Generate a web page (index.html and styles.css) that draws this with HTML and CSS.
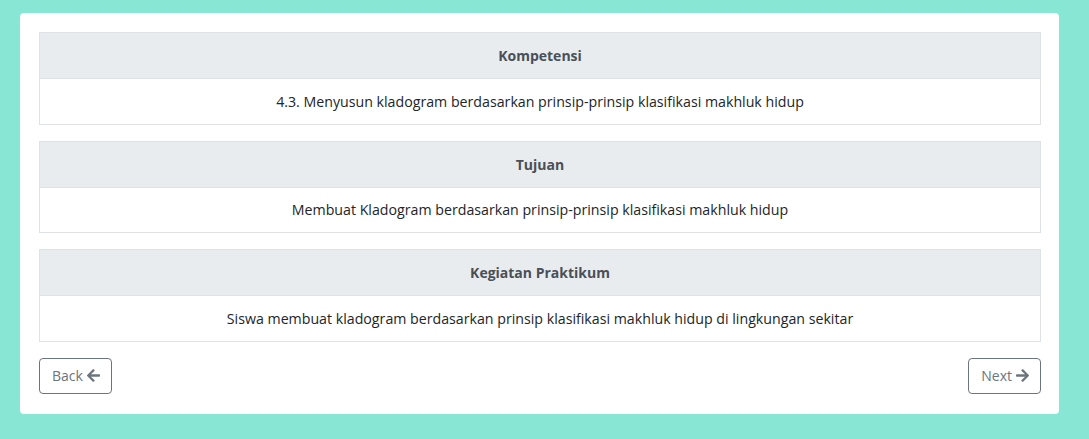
FILE: index.html
```html
<!DOCTYPE html>
<html>
<head>
<meta charset="utf-8">
<link rel="stylesheet" href="styles.css">
</head>
<body>
<div class="card">
  <div class="block">
    <div class="head">Kompetensi</div>
    <div class="body">4.3. Menyusun kladogram berdasarkan prinsip-prinsip klasifikasi makhluk hidup</div>
  </div>
  <div class="block">
    <div class="head">Tujuan</div>
    <div class="body">Membuat Kladogram berdasarkan prinsip-prinsip klasifikasi makhluk hidup</div>
  </div>
  <div class="block">
    <div class="head">Kegiatan Praktikum</div>
    <div class="body">Siswa membuat kladogram berdasarkan prinsip klasifikasi makhluk hidup di lingkungan sekitar</div>
  </div>
  <div class="nav">
    <button class="btn">Back <svg class="ico" viewBox="0 0 448 512"><path d="M257.5 445.1l-22.2 22.2c-9.4 9.4-24.6 9.4-33.9 0L7 273c-9.4-9.4-9.4-24.6 0-33.9L201.4 44.7c9.4-9.4 24.6-9.4 33.9 0l22.2 22.2c9.5 9.5 9.3 25-.4 34.3L136.6 216H424c13.3 0 24 10.7 24 24v32c0 13.3-10.7 24-24 24H136.6l120.5 114.8c9.8 9.3 10 24.8.4 34.3z"/></svg></button>
    <button class="btn">Next <svg class="ico" viewBox="0 0 448 512"><path d="M190.5 66.9l22.2-22.2c9.4-9.4 24.6-9.4 33.9 0L441 239c9.4 9.4 9.4 24.6 0 33.9L246.6 467.3c-9.4 9.4-24.6 9.4-33.9 0l-22.2-22.2c-9.5-9.5-9.3-25 .4-34.3L311.4 296H24c-13.3 0-24-10.7-24-24v-32c0-13.3 10.7-24 24-24h287.4L190.9 101.2c-9.8-9.3-10-24.8-.4-34.3z"/></svg></button>
  </div>
</div>
</body>
</html>
```

FILE: styles.css
```css
html, body { margin: 0; padding: 0; }
body {
  background: #87e7d4;
  font-family: "Open Sans", "Noto Sans", sans-serif;
  font-size: 14px;
  color: #212529;
  padding: 13px 30px 26px 20px;
}
.card {
  background: #fff;
  border-radius: 4px;
  padding: 19px 18px 20px 19px;
  display: flex;
  flex-direction: column;
  gap: 16px;
}
.block {
  border: 1px solid #dee2e6;
}
.head {
  background: #e9ecef;
  height: 45px;
  display: flex;
  align-items: center;
  justify-content: center;
  font-weight: bold;
  color: #495057;
  border-bottom: 1px solid #dee2e6;
}
.body {
  height: 44.5px;
  display: flex;
  align-items: center;
  justify-content: center;
  font-size: 14.2px;
}
.nav {
  display: flex;
  justify-content: space-between;
}
.btn {
  font-family: inherit;
  font-size: 14px;
  color: #6c757d;
  background: #fff;
  border: 1px solid #6c757d;
  border-radius: 4px;
  height: 36px;
  padding: 0 11px 0 12px;
  display: flex;
  align-items: center;
  gap: 4px;
}
.ico { width: 13px; height: 15px; fill: #6c757d; }
```
